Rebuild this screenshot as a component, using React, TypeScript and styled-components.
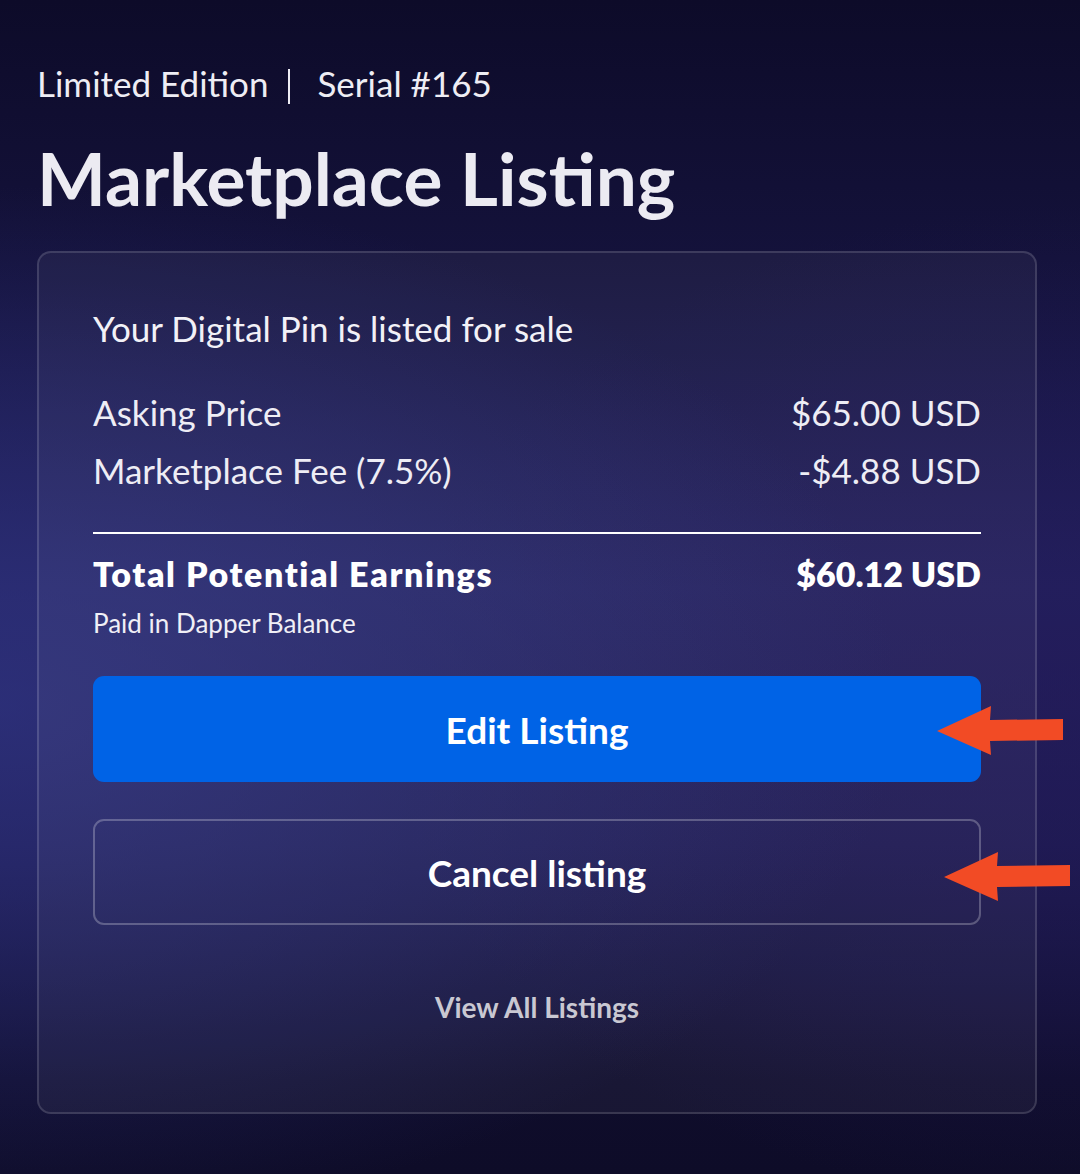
import React from 'react';
import styled, { createGlobalStyle } from 'styled-components';

const GlobalStyle = createGlobalStyle`
  html, body {
    margin: 0;
    padding: 0;
    background: #100e30;
  }
  body {
    font-family: Lato, "Noto Sans", sans-serif;
    color: #f2f1f7;
  }
`;

const Page = styled.div`
  position: relative;
  width: 1080px;
  height: 1174px;
  box-sizing: border-box;
  padding: 61px 44px 0 37px;
  overflow: hidden;
  background:
    radial-gradient(ellipse 900px 520px at 0% 60%, rgba(48, 52, 130, 0.75), rgba(48, 52, 130, 0) 100%),
    radial-gradient(ellipse 700px 500px at 100% 60%, rgba(36, 26, 90, 0.6), rgba(36, 26, 90, 0) 100%),
    linear-gradient(180deg, #0d0b29 0%, #14123b 22%, #22215e 50%, #1c1a4f 72%, #0f0d2c 92%, #0e0c28 100%);
`;

const Eyebrow = styled.div`
  display: flex;
  align-items: center;
  font-size: 35px;
  line-height: 44px;
  color: #eeedf4;
`;

const Divider = styled.span`
  width: 2px;
  height: 35px;
  margin: 6px 27px 0 20px;
  background: #eeedf4;
`;

const Title = styled.h1`
  margin: 31px 0 31px;
  font-size: 73px;
  line-height: 84px;
  font-weight: 700;
  color: #ecebf2;
`;

const Card = styled.section`
  box-sizing: border-box;
  width: 1000px;
  height: 863px;
  padding: 51px 54px 0;
  border: 2px solid rgba(255, 255, 255, 0.14);
  border-radius: 14px;
  background: rgba(255, 255, 255, 0.045);
  display: flex;
  flex-direction: column;
`;

const Status = styled.p`
  margin: 0 0 31px;
  font-size: 35px;
  line-height: 48px;
`;

const Row = styled.div<{ $strong?: boolean }>`
  display: flex;
  justify-content: space-between;
  align-items: baseline;
  font-size: ${p => (p.$strong ? 34 : 35)}px;
  line-height: 58px;
  font-weight: ${p => (p.$strong ? 800 : 400)};
  color: ${p => (p.$strong ? '#ffffff' : '#eeedf5')};
`;

const Label = styled.span<{ $spread?: boolean }>`
  letter-spacing: ${p => (p.$spread ? 1.6 : 0)}px;
`;

const Rule = styled.hr`
  margin: 33px 0 11px;
  border: none;
  height: 2px;
  background: #ffffff;
`;

const Note = styled.div`
  font-size: 26px;
  line-height: 40px;
  color: #f0eff6;
`;

const Actions = styled.div`
  margin-top: 33px;
  display: flex;
  flex-direction: column;
  gap: 37px;
`;

const Button = styled.button<{ $primary?: boolean }>`
  box-sizing: border-box;
  width: 100%;
  height: 106px;
  border-radius: 11px;
  font-family: inherit;
  font-size: 37px;
  font-weight: 700;
  color: #ffffff;
  cursor: pointer;
  background: ${p => (p.$primary ? '#0063e6' : 'transparent')};
  border: ${p => (p.$primary ? 'none' : '2px solid rgba(255, 255, 255, 0.25)')};
`;

const LinkButton = styled.a`
  margin-top: 64px;
  align-self: center;
  font-size: 28px;
  line-height: 36px;
  font-weight: 700;
  color: #c9c8d2;
  text-decoration: none;
`;

// callout arrows drawn over the buttons
const Arrow = styled.svg<{ $top: number; $left: number }>`
  position: absolute;
  top: ${p => p.$top}px;
  left: ${p => p.$left}px;
`;

const Pointer = ({ top, left }: { top: number; left: number }) => (
  <Arrow $top={top} $left={left} width="130" height="50" viewBox="0 0 130 50">
    <path d="M0 25 L54 0 L53 14 L126 13 L126 34 L53 35 L54 49 Z" fill="#f24b25" />
  </Arrow>
);

export default function App() {
  return (
    <Page>
      <GlobalStyle />
      <Eyebrow>
        <span>Limited Edition</span>
        <Divider />
        <span>Serial #165</span>
      </Eyebrow>
      <Title>Marketplace Listing</Title>
      <Card>
        <Status>Your Digital Pin is listed for sale</Status>
        <Row>
          <span>Asking Price</span>
          <span>$65.00 USD</span>
        </Row>
        <Row>
          <span>Marketplace Fee (7.5%)</span>
          <span>-$4.88 USD</span>
        </Row>
        <Rule />
        <Row $strong>
          <Label $spread>Total Potential Earnings</Label>
          <Label>$60.12 USD</Label>
        </Row>
        <Note>Paid in Dapper Balance</Note>
        <Actions>
          <Button $primary>Edit Listing</Button>
          <Button>Cancel listing</Button>
        </Actions>
        <LinkButton href="#">View All Listings</LinkButton>
      </Card>
      <Pointer top={706} left={937} />
      <Pointer top={852} left={944} />
    </Page>
  );
}
